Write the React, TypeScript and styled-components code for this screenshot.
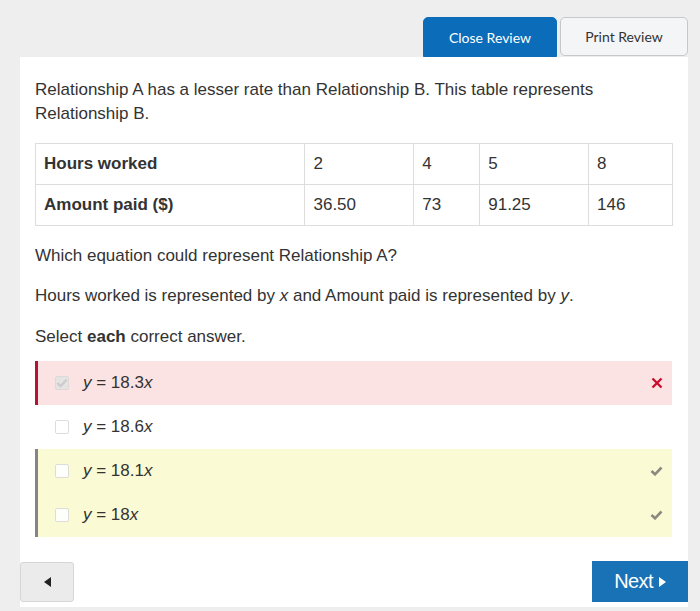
import React from "react";
import styled, { createGlobalStyle } from "styled-components";

const GlobalStyle = createGlobalStyle`
    html, body {
        margin: 0;
        padding: 0;
        background: #eeeeee;
    }
    body {
        font-family: "Liberation Sans", Arial, sans-serif;
        color: #333;
    }
`;

const Page = styled.div`
    width: 700px;
    height: 611px;
    box-sizing: border-box;
    padding: 17px 12px 0 20px;
    background: #eeeeee;
`;

const Header = styled.div`
    display: flex;
    justify-content: flex-end;
    align-items: flex-start;
    gap: 3px;
`;

const HeaderButton = styled.button<{ $primary?: boolean }>`
    font-family: Lato, "Open Sans", sans-serif;
    font-size: 14px;
    height: ${p => (p.$primary ? "40px" : "39px")};
    width: ${p => (p.$primary ? "134px" : "128px")};
    border-radius: ${p => (p.$primary ? "5px 5px 0 0" : "5px")};
    border: 1px solid ${p => (p.$primary ? "#0b6dba" : "#c8c8c8")};
    background: ${p => (p.$primary ? "#0b6dba" : "#f3f5f7")};
    color: ${p => (p.$primary ? "#fff" : "#333")};
    padding: 0;
`;

const Panel = styled.div`
    background: #fff;
    padding: 21px 0 5px;
`;

const Body = styled.div`
    padding: 0 15px;
`;

const Text = styled.p<{ $gap?: number }>`
    margin: ${p => p.$gap ?? 0}px 0 0;
    font-size: 17px;
    line-height: 24px;
`;

const Table = styled.table`
    margin-top: 17px;
    width: 638px;
    border-collapse: collapse;
    font-size: 17px;
`;

const Cell = styled.td<{ $w: number; $head?: boolean }>`
    width: ${p => p.$w}px;
    height: 41px;
    box-sizing: border-box;
    border: 1px solid #dddddd;
    padding: 0 8px;
    font-weight: ${p => (p.$head ? "bold" : "normal")};
    vertical-align: middle;
`;

const Options = styled.div`
    margin-top: 12px;
    width: 637px;
`;

const Group = styled.div<{ $mark?: string; $bg?: string }>`
    background: ${p => p.$bg ?? "transparent"};
    border-left: 3px solid ${p => p.$mark ?? "transparent"};
`;

const Option = styled.div`
    height: 44px;
    display: flex;
    align-items: center;
    padding: 0 9px 0 17px;
    font-size: 17px;
`;

const Box = styled.span<{ $checked?: boolean }>`
    width: 14px;
    height: 14px;
    box-sizing: border-box;
    border: 1px solid #d9d9d9;
    border-radius: 2px;
    background: ${p => (p.$checked ? "#e4e4e4" : "#fff")};
    display: flex;
    align-items: center;
    justify-content: center;
    margin-right: 14px;
    opacity: 0.9;
`;

const Label = styled.span`
    flex: 1;
    i {
        font-style: italic;
    }
`;

const Nav = styled.div`
    margin-top: 24px;
    display: flex;
    justify-content: space-between;
    align-items: flex-end;
`;

const PrevButton = styled.button`
    width: 54px;
    height: 40px;
    background: #ebebeb;
    border: 1px solid #d6d6d6;
    border-radius: 3px;
    display: flex;
    align-items: center;
    justify-content: center;
    padding: 0;
`;

const NextButton = styled.button`
    width: 96px;
    height: 41px;
    background: #1a72b6;
    border: none;
    color: #fff;
    font-family: "Liberation Sans Narrow", "Liberation Sans", Arial, sans-serif;
    font-size: 20px;
    letter-spacing: -0.6px;
    display: flex;
    align-items: center;
    justify-content: center;
    gap: 6px;
    padding: 0;
`;

const Check = ({ color }: { color: string }) => (
    <svg width="13" height="10" viewBox="0 0 13 10">
        <path d="M1.5 5 L5 8.3 L11.5 1.5" fill="none" stroke={color} strokeWidth="2.6" />
    </svg>
);

const Cross = () => (
    <svg width="12" height="12" viewBox="0 0 12 12">
        <path d="M1.5 1.5 L10.5 10.5 M10.5 1.5 L1.5 10.5" stroke="#c8102e" strokeWidth="2.4" />
    </svg>
);

const hours = ["2", "4", "5", "8"];
const paid = ["36.50", "73", "91.25", "146"];
const widths = [109, 66, 109, 84];

const App: React.FC = () => {
    return (
        <Page>
            <GlobalStyle />
            <Header>
                <HeaderButton $primary>Close Review</HeaderButton>
                <HeaderButton>Print Review</HeaderButton>
            </Header>
            <Panel>
                <Body>
                    <Text>
                        Relationship A has a lesser rate than Relationship B. This table represents Relationship B.
                    </Text>
                    <Table>
                        <tbody>
                            <tr>
                                <Cell $w={270} $head>Hours worked</Cell>
                                {hours.map((h, i) => (
                                    <Cell key={h} $w={widths[i]}>{h}</Cell>
                                ))}
                            </tr>
                            <tr>
                                <Cell $w={270} $head>Amount paid ($)</Cell>
                                {paid.map((v, i) => (
                                    <Cell key={v} $w={widths[i]}>{v}</Cell>
                                ))}
                            </tr>
                        </tbody>
                    </Table>
                    <Text $gap={18}>Which equation could represent Relationship A?</Text>
                    <Text $gap={16}>
                        Hours worked is represented by <i>x</i> and Amount paid is represented by <i>y</i>.
                    </Text>
                    <Text $gap={17}>
                        Select <b>each</b> correct answer.
                    </Text>
                    <Options>
                        <Group $mark="#b5123a" $bg="#fbe3e3">
                            <Option>
                                <Box $checked>
                                    <Check color="#c9c9c9" />
                                </Box>
                                <Label><i>y</i> = 18.3<i>x</i></Label>
                                <Cross />
                            </Option>
                        </Group>
                        <Group>
                            <Option>
                                <Box />
                                <Label><i>y</i> = 18.6<i>x</i></Label>
                            </Option>
                        </Group>
                        <Group $mark="#858585" $bg="#fafad4">
                            <Option>
                                <Box />
                                <Label><i>y</i> = 18.1<i>x</i></Label>
                                <Check color="#8a8a80" />
                            </Option>
                            <Option>
                                <Box />
                                <Label><i>y</i> = 18<i>x</i></Label>
                                <Check color="#8a8a80" />
                            </Option>
                        </Group>
                    </Options>
                </Body>
                <Nav>
                    <PrevButton>
                        <svg width="7" height="10" viewBox="0 0 7 10">
                            <path d="M7 0 L0 5 L7 10 Z" fill="#222" />
                        </svg>
                    </PrevButton>
                    <NextButton>
                        Next
                        <svg width="7" height="10" viewBox="0 0 7 10">
                            <path d="M0 0 L7 5 L0 10 Z" fill="#fff" />
                        </svg>
                    </NextButton>
                </Nav>
            </Panel>
        </Page>
    );
};

export default App;
